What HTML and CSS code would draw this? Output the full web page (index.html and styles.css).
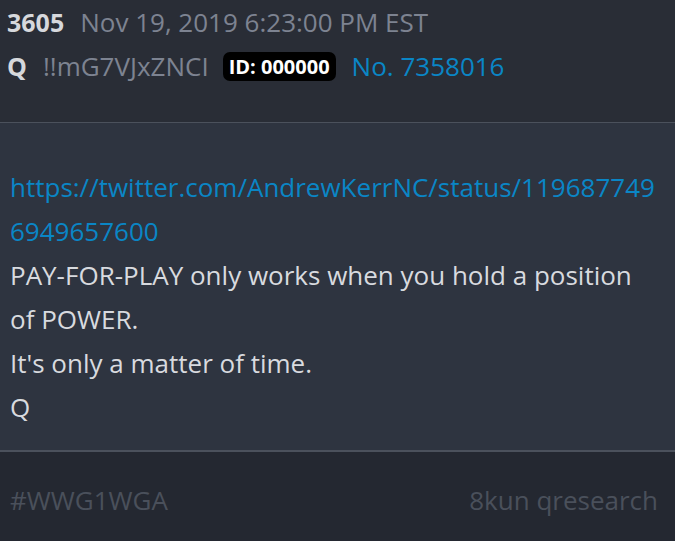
FILE: index.html
```html
<!DOCTYPE html>
<html>
<head>
    <title>3605</title>
    <meta charset="UTF-8">
    <link rel="stylesheet" href="styles.css">
</head>
<body>
    <div class="post">
        <div class="post-head">
            <div class="head-row">
                <span class="post-num">3605</span>
                <span class="post-date">Nov 19, 2019 6:23:00 PM EST</span>
            </div>
            <div class="head-row">
                <span class="author">Q</span>
                <span class="trip">!!mG7VJxZNCI</span>
                <span class="id-badge">ID: 000000</span>
                <a class="post-no" href="#">No. 7358016</a>
            </div>
        </div>

        <div class="post-body">
            <a class="link" href="#">https://twitter.com/AndrewKerrNC/status/1196877496949657600</a>
            <p>PAY-FOR-PLAY only works when you hold a position of POWER.</p>
            <p>It's only a matter of time.</p>
            <p>Q</p>
        </div>

        <div class="post-foot">
            <span>#WWG1WGA</span>
            <span>8kun qresearch</span>
        </div>
    </div>
</body>
</html>
```

FILE: styles.css
```css
body {
    margin: 0;
    background: #2e3440;
    font-family: 'Open Sans', sans-serif;
    overflow: hidden;
}
.post {
    width: 675px;
    height: 541px;
    display: flex;
    flex-direction: column;
}
.post-head {
    background: #292d36;
    height: 123px;
    box-sizing: border-box;
    padding: 0 10px 0 7px;
    border-bottom: 1px solid #4b515c;
}
.head-row {
    display: flex;
    align-items: center;
    height: 44px;
    font-size: 26px;
}
.post-num,
.author {
    color: #d6d8dc;
    font-weight: bold;
    font-size: 25px;
    margin-right: 16px;
}
.post-date,
.trip {
    color: #7d8391;
}
.trip {
    margin-right: 14px;
}
.id-badge {
    background: #000;
    color: #fff;
    font-weight: bold;
    font-size: 20px;
    line-height: 29px;
    padding: 0 6px;
    border-radius: 7px;
    margin-right: 16px;
}
.post-no {
    color: #0a86c6;
    text-decoration: none;
}
.post-body {
    flex: 1;
    padding: 42px 18px 0 10px;
    font-size: 26px;
    line-height: 44px;
    color: #d8dadf;
    border-bottom: 2px solid #4b515c;
}
.link {
    color: #0a86c6;
    text-decoration: none;
    word-break: break-all;
}
.post-body p {
    margin: 0;
}
.post-foot {
    background: #242831;
    height: 89px;
    box-sizing: border-box;
    padding: 6px 17px 0 10px;
    display: flex;
    justify-content: space-between;
    align-items: center;
    font-size: 26px;
    color: #4a505b;
}
```
